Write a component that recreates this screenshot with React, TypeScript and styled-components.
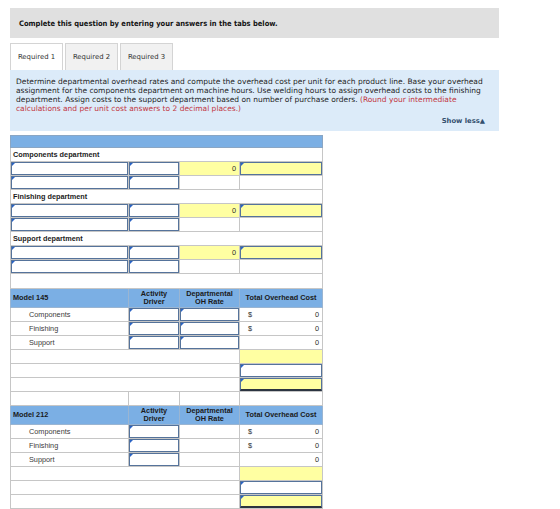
import React from 'react';
import styled, { createGlobalStyle, css } from 'styled-components';

const GlobalStyle = createGlobalStyle`
  body {
    margin: 0;
    background: #ffffff;
  }
`;

const Page = styled.div`
  padding: 8px 0 0 10px;
  font-family: 'DejaVu Sans', Verdana, sans-serif;
  color: #1e1e1e;
`;

const QuestionBar = styled.div`
  width: 480px;
  height: 30px;
  padding-left: 9px;
  display: flex;
  align-items: center;
  background: #e0e0e0;
  font-family: 'DejaVu Sans Condensed', 'DejaVu Sans', Verdana, sans-serif;
  font-size: 7.5px;
  font-weight: bold;
  color: #141414;
`;

const TabRow = styled.div`
  display: flex;
  gap: 2px;
  margin-top: 5px;
  height: 27px;
`;

const Tab = styled.div<{ $active?: boolean }>`
  width: 53px;
  box-sizing: border-box;
  display: flex;
  align-items: center;
  justify-content: center;
  font-size: 6.9px;
  color: #333;
  border: 1px solid #d4d4d4;
  border-bottom: none;
  background: ${(p) => (p.$active ? '#ffffff' : '#f1f1f1')};
`;

const Instructions = styled.div`
  width: 489px;
  height: 61px;
  box-sizing: border-box;
  padding: 7px 14px 0 6px;
  background: #dcebf9;
  position: relative;
  font-size: 7.5px;
  line-height: 9px;
  color: #1e1e1e;
`;

const RoundNote = styled.span`
  color: #c2363f;
`;

const ShowLess = styled.div`
  position: absolute;
  right: 14px;
  bottom: 5px;
  font-size: 6.8px;
  font-weight: bold;
  color: #34506e;
`;

const Sheet = styled.table`
  margin-top: 4px;
  border-collapse: collapse;
  table-layout: fixed;
  width: 313px;
  font-family: 'Liberation Sans', Arial, sans-serif;
  font-size: 7.3px;
  color: #2a2a2a;
  border: 1px solid #a0a0a0;
`;

const Row = styled.tr<{ $h?: number }>`
  height: ${(p) => p.$h ?? 14}px;
`;

const Cell = styled.td<{ $tone?: 'yellow' | 'white'; $align?: 'left' | 'right' }>`
  padding: 0 3px;
  border: 1px solid #c6c6c6;
  background: ${(p) => (p.$tone === 'yellow' ? '#ffffa2' : '#ffffff')};
  text-align: ${(p) => p.$align ?? 'left'};
  vertical-align: middle;
  white-space: nowrap;
`;

const BandCell = styled.td`
  height: 11px;
  padding: 0;
  background: #7bafe4;
  border: 1px solid #8aa6c4;
`;

const SectionLabel = styled.td`
  padding: 0 2px;
  font-weight: bold;
  color: #1c1c1c;
  border: 1px solid #c6c6c6;
`;

const ItemLabel = styled(Cell)`
  padding-left: 18px;
  color: #3a3a3a;
`;

const HeadCell = styled.th<{ $left?: boolean }>`
  padding: 0 2px;
  background: #7bafe4;
  border: 1px solid #9ab5d2;
  font-weight: bold;
  line-height: 8px;
  color: #1a1a1a;
  text-align: ${(p) => (p.$left ? 'left' : 'center')};
  vertical-align: middle;
`;

const EntryCell = styled.td`
  padding: 0;
  border: 1px solid #c6c6c6;
`;

const Entry = styled.div<{ $tone?: 'yellow' | 'white'; $total?: boolean }>`
  position: relative;
  height: 13px;
  box-sizing: border-box;
  border: 1px solid #55739b;
  background: ${(p) => (p.$tone === 'yellow' ? '#ffffa2' : '#ffffff')};
  ${(p) =>
    p.$total &&
    css`
      border-bottom: 2px solid #2c3440;
    `}

  &::before {
    content: '';
    position: absolute;
    left: 0;
    top: 0;
    border-top: 3px solid #2a63c4;
    border-right: 3px solid transparent;
  }
`;

const Amount = styled.div`
  display: flex;
  justify-content: space-between;
  padding-left: 5px;
`;

function InputCell({ tone, total }: { tone?: 'yellow' | 'white'; total?: boolean }) {
  return (
    <EntryCell>
      <Entry $tone={tone} $total={total} />
    </EntryCell>
  );
}

const departments = ['Components department', 'Finishing department', 'Support department'];

function DepartmentBlock({ name }: { name: string }) {
  return (
    <>
      <Row>
        <SectionLabel colSpan={4}>{name}</SectionLabel>
      </Row>
      <Row>
        <InputCell />
        <InputCell />
        <Cell $tone="yellow" $align="right">0</Cell>
        <InputCell tone="yellow" />
      </Row>
      <Row>
        <InputCell />
        <InputCell />
        <Cell />
        <Cell />
      </Row>
    </>
  );
}

const costLines = [
  { name: 'Components', dollar: true },
  { name: 'Finishing', dollar: true },
  { name: 'Support', dollar: false },
];

function ModelBlock({ model, rateInputs }: { model: string; rateInputs: boolean }) {
  return (
    <>
      <Row $h={19}>
        <HeadCell $left>{model}</HeadCell>
        <HeadCell>
          Activity
          <br />
          Driver
        </HeadCell>
        <HeadCell>
          Departmental
          <br />
          OH Rate
        </HeadCell>
        <HeadCell>Total Overhead Cost</HeadCell>
      </Row>
      {costLines.map((line) => (
        <Row key={line.name}>
          <ItemLabel>{line.name}</ItemLabel>
          <InputCell />
          {rateInputs ? <InputCell /> : <Cell />}
          <Cell>
            <Amount>
              <span>{line.dollar ? '$' : ''}</span>
              <span>0</span>
            </Amount>
          </Cell>
        </Row>
      ))}
      <Row>
        <Cell colSpan={3} />
        <Cell $tone="yellow" />
      </Row>
      <Row>
        <Cell colSpan={3} />
        <InputCell />
      </Row>
      <Row>
        <Cell colSpan={3} />
        <InputCell tone="yellow" total />
      </Row>
    </>
  );
}

export default function App() {
  return (
    <>
      <GlobalStyle />
      <Page>
        <QuestionBar>Complete this question by entering your answers in the tabs below.</QuestionBar>
        <TabRow>
          <Tab $active>Required 1</Tab>
          <Tab>Required 2</Tab>
          <Tab>Required 3</Tab>
        </TabRow>
        <Instructions>
          Determine departmental overhead rates and compute the overhead cost per unit for each
          product line. Base your overhead assignment for the components department on machine
          hours. Use welding hours to assign overhead costs to the finishing department. Assign
          costs to the support department based on number of purchase orders.{' '}
          <RoundNote>(Round your intermediate calculations and per unit cost answers to 2 decimal places.)</RoundNote>
          <ShowLess>Show less▲</ShowLess>
        </Instructions>
        <Sheet>
          <colgroup>
            <col style={{ width: 118 }} />
            <col style={{ width: 51 }} />
            <col style={{ width: 60 }} />
            <col style={{ width: 83 }} />
          </colgroup>
          <tbody>
            <tr>
              <BandCell colSpan={4} />
            </tr>
            {departments.map((d) => (
              <DepartmentBlock key={d} name={d} />
            ))}
            <Row $h={15}>
              <Cell colSpan={4} />
            </Row>
            <ModelBlock model="Model 145" rateInputs />
            <Row>
              <Cell />
              <Cell />
              <Cell />
              <Cell />
            </Row>
            <ModelBlock model="Model 212" rateInputs={false} />
          </tbody>
        </Sheet>
      </Page>
    </>
  );
}
